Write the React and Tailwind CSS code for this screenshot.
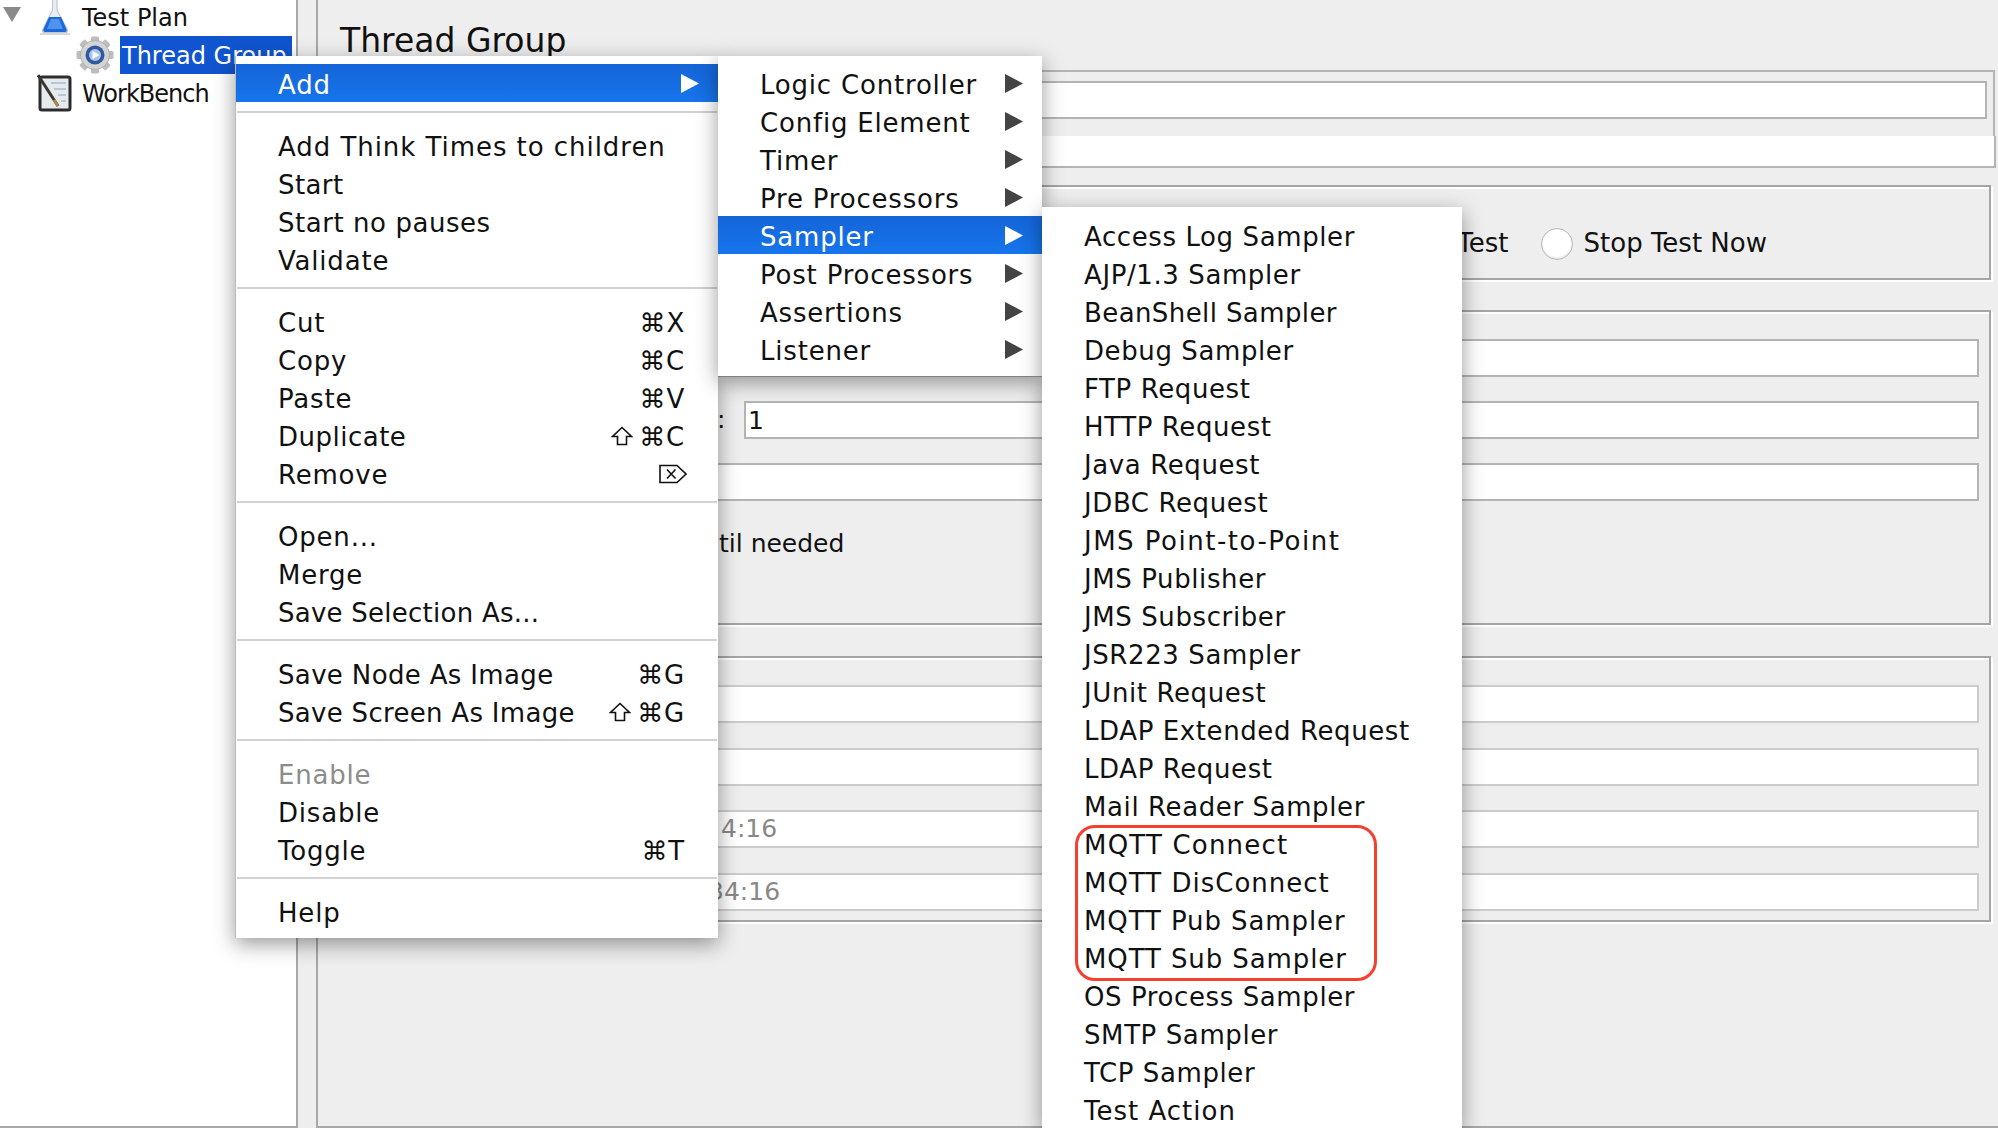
import React from "react";

const FONT = "font-['DejaVu_Sans','Liberation_Sans',sans-serif]";

const mainMenu = [
  { label: "Add", active: true, arrow: true },
  "sep",
  { label: "Add Think Times to children", track: "tracking-[0.95px]" },
  { label: "Start", track: "tracking-[0.4px]" },
  { label: "Start no pauses", track: "tracking-[0.55px]" },
  { label: "Validate" },
  "sep",
  { label: "Cut", keys: "⌘X" },
  { label: "Copy", keys: "⌘C" },
  { label: "Paste", keys: "⌘V" },
  { label: "Duplicate", keys: "⌘C", shift: true, track: "tracking-[0.5px]" },
  { label: "Remove" , del: true},
  "sep",
  { label: "Open..." },
  { label: "Merge" },
  { label: "Save Selection As...", track: "tracking-[0.25px]" },
  "sep",
  { label: "Save Node As Image", track: "tracking-[0.35px]", keys: "⌘G" },
  { label: "Save Screen As Image", track: "tracking-[0.3px]", keys: "⌘G", shift: true },
  "sep",
  { label: "Enable", disabled: true },
  { label: "Disable" },
  { label: "Toggle", keys: "⌘T" },
  "sep",
  { label: "Help" },
];

const addMenu = [
  "Logic Controller",
  "Config Element",
  "Timer",
  "Pre Processors",
  "Sampler",
  "Post Processors",
  "Assertions",
  "Listener",
];

const samplers = [
  { label: "Access Log Sampler" },
  { label: "AJP/1.3 Sampler" },
  { label: "BeanShell Sampler", track: "tracking-[0.4px]" },
  { label: "Debug Sampler" },
  { label: "FTP Request" },
  { label: "HTTP Request" },
  { label: "Java Request" },
  { label: "JDBC Request" },
  { label: "JMS Point-to-Point", track: "tracking-[1.5px]" },
  { label: "JMS Publisher" },
  { label: "JMS Subscriber" },
  { label: "JSR223 Sampler" },
  { label: "JUnit Request" },
  { label: "LDAP Extended Request" },
  { label: "LDAP Request" },
  { label: "Mail Reader Sampler" },
  { label: "MQTT Connect", track: "tracking-[1.2px]" },
  { label: "MQTT DisConnect", track: "tracking-[1px]" },
  { label: "MQTT Pub Sampler", track: "tracking-[0.9px]" },
  { label: "MQTT Sub Sampler", track: "tracking-[0.9px]" },
  { label: "OS Process Sampler" },
  { label: "SMTP Sampler" },
  { label: "TCP Sampler" },
  { label: "Test Action", track: "tracking-[1px]" },
];

function Arrow({ white }) {
  return (
    <svg width="18" height="19" viewBox="0 0 18 19" className="-mt-[3px] shrink-0">
      <path d="M0 0L18 9.5L0 19Z" fill={white ? "#ffffff" : "#444444"} />
    </svg>
  );
}

function ShiftKey() {
  return (
    <svg width="22" height="20" viewBox="0 0 22 20" fill="none" stroke="#111" strokeWidth="1.6" className="mr-[6px] -mt-[3px]">
      <path d="M11 1.5L20.5 10.5H15.5V18.5H6.5V10.5H1.5Z" />
    </svg>
  );
}

function DeleteKey() {
  return (
    <svg width="28" height="20" viewBox="0 0 28 20" fill="none" stroke="#111" strokeWidth="1.6" className="-mt-[3px]">
      <path d="M1 1.5H18L27 10L18 18.5H1Z" />
      <path d="M8 5.5L16.5 14.5M16.5 5.5L8 14.5" />
    </svg>
  );
}

function Flask() {
  return (
    <svg width="30" height="36" viewBox="0 0 30 36" className="shrink-0">
      <path d="M12.5 0H17V11L27 30Q28.5 33.5 25 33.5H5Q1.5 33.5 3 30L12.5 11Z" fill="#e9edf2" stroke="#c3c8cf" strokeWidth="1.2" />
      <path d="M9 18H21L26.5 30Q27.5 33 25 33H5Q2.5 33 3.5 30Z" fill="#1a68dc" />
      <path d="M11 20H19L23 30H7Z" fill="#4f93ee" />
      <path d="M0 35H30" stroke="#c8ccd0" strokeWidth="1.5" />
    </svg>
  );
}

function Gear() {
  const teeth = [0, 45, 90, 135, 180, 225, 270, 315];
  return (
    <svg width="38" height="38" viewBox="0 0 38 38" className="shrink-0">
      {teeth.map((a) => (
        <rect key={a} x="15" y="0.5" width="8" height="8" rx="1.5" fill="#bdbdbd" transform={`rotate(${a} 19 19)`} />
      ))}
      <circle cx="19" cy="19" r="14.5" fill="#d4d4d4" stroke="#b0b0b0" />
      <circle cx="19" cy="19" r="9.5" fill="#2f5b9e" />
      <circle cx="19" cy="19" r="6" fill="#a9c4e8" />
      <path d="M16.5 15L23.5 19L16.5 23Z" fill="#ffffff" />
    </svg>
  );
}

function Workbench() {
  return (
    <svg width="36" height="38" viewBox="0 0 36 38" className="shrink-0">
      <rect x="3" y="3" width="30" height="33" rx="2" fill="#e4eaee" stroke="#2c2c2c" strokeWidth="3" />
      <path d="M14 9H29M17 15H29M21 21H29M24 27H29" stroke="#a9bccb" strokeWidth="1.5" />
      <path d="M1 1L21 32" stroke="#3b3530" strokeWidth="3" />
      <path d="M17 26L21 32" stroke="#b08a3c" strokeWidth="3" />
    </svg>
  );
}

function MenuRow({ item }) {
  const bg = item.active ? "bg-gradient-to-b from-[#1564d8] to-[#1675ec] text-white" : "";
  const color = item.disabled ? "text-[#8c8c8c]" : "";
  return (
    <div className={`flex h-[38px] items-center justify-between pl-[42px] pr-[19px] pt-[4px] whitespace-nowrap ${bg} ${color}`}>
      <span className={item.track || ""}>{item.label}</span>
      {item.arrow && <Arrow white={item.active} />}
      {item.keys && (
        <span className="flex items-center pr-[14px]">
          {item.shift && <ShiftKey />}
          {item.keys}
        </span>
      )}
      {item.del && (
        <span className="flex pr-[12px]">
          <DeleteKey />
        </span>
      )}
    </div>
  );
}

function Input({ className, children }) {
  return (
    <div className={`flex h-[38px] items-center bg-white border-2 border-[#b4b4b4] text-[25px] ${className || ""}`}>
      {children}
    </div>
  );
}

function Group({ className, children }) {
  return (
    <div className={`mr-[7px] border-2 border-[#a5a5a5] shadow-[inset_2px_2px_0_#fff,2px_2px_0_#fff] ${className}`}>
      {children}
    </div>
  );
}

export default function App() {
  return (
    <div className={`relative flex h-[1128px] w-full overflow-hidden bg-[#eeeeee] text-[#111111] text-[25px] ${FONT}`}>
      {/* TREE */}
      <div className="w-[298px] shrink-0 border-r-2 border-b-2 border-[#a8a8a8] bg-white text-[24px]">
        <div className="-mt-[2px] flex h-[38px] items-center">
          <svg width="18" height="15" viewBox="0 0 18 15" className="ml-[3px] mr-[19px] -mt-[6px]">
            <path d="M0 0H18L9 15Z" fill="#8a8a8a" />
          </svg>
          <Flask />
          <span className="ml-[12px] pt-[2px]">Test Plan</span>
        </div>
        <div className="flex h-[38px] items-center pl-[76px]">
          <Gear />
          <span className="ml-[6px] flex h-[38px] w-[172px] items-center overflow-hidden whitespace-nowrap bg-[#1055cf] pl-[2px] pt-[2px] text-white">
            Thread Group
          </span>
        </div>
        <div className="flex h-[38px] items-center pl-[37px]">
          <Workbench />
          <span className="ml-[9px] pt-[2px] tracking-[-1px]">WorkBench</span>
        </div>
      </div>

      <div className="w-[18px] shrink-0" />

      {/* MAIN PANEL */}
      <div className="flex-1 border-l-2 border-b-2 border-[#a8a8a8]">
        <div className="flex h-[70px] items-center pl-[22px] pt-[12px] text-[33px]">Thread Group</div>

        <div className="ml-[6px] mr-[3px] h-[66px] border-t-2 border-r-2 border-[#b4b4b4] pr-[6px] pt-[9px]">
          <Input />
        </div>
        <div className="ml-[6px] mr-[2px] h-[32px] border-b-2 border-r-2 border-[#b4b4b4] bg-white" />

        <Group className="mt-[17px] ml-[6px] flex h-[95px] items-center justify-end pr-[6px] pt-[22px] text-[26px]">
          <span className="mr-[32px]">Test</span>
          <div className="h-[32px] w-[32px] rounded-full border border-[#b8b8b8] bg-white shadow-[inset_0_-1px_2px_#ddd]" />
          <span className="ml-[11px] mr-[216px]">Stop Test Now</span>
        </Group>

        <Group className="mt-[30px] ml-[6px] h-[315px] pl-[6px] pr-[10px] pt-[27px]">
          <Input />
          <div className="mt-[24px] flex items-center">
            <span className="ml-[385px] w-[27px]">:</span>
            <Input className="flex-1 pl-[2px] pt-[2px]">1</Input>
          </div>
          <Input className="mt-[24px]" />
          <div className="mt-[24px] pl-[387px]">til needed</div>
        </Group>

        <Group className="mt-[31px] ml-[6px] h-[266px] pr-[10px] pt-[27px]">
          <Input className="border-[#cccccc]" />
          <Input className="mt-[25px] border-[#cccccc]" />
          <Input className="mt-[24px] ml-[360px] border-[#cccccc] pl-[33px] text-[#888888]">4:16</Input>
          <Input className="mt-[25px] ml-[360px] border-[#cccccc] pl-[20px] text-[#888888]">34:16</Input>
        </Group>
      </div>

      {/* CONTEXT MENU */}
      <div className="absolute left-[235px] top-[56px] w-[483px] bg-white pt-[8px] pb-[8px] text-[26px] tracking-[0.8px] shadow-[0_6px_20px_rgba(0,0,0,0.4)] border-l border-[#bbbbbb]">
        {mainMenu.map((item, i) =>
          item === "sep" ? (
            <div key={i} className="h-[24px] pt-[9px]">
              <div className="mx-[1px] h-[2px] bg-[#d2d2d2]" />
            </div>
          ) : (
            <MenuRow key={i} item={item} />
          ),
        )}
      </div>

      {/* ADD SUBMENU */}
      <div className="absolute left-[718px] top-[56px] w-[324px] bg-white py-[8px] text-[26px] tracking-[0.8px] shadow-[0_6px_20px_rgba(0,0,0,0.4)]">
        {addMenu.map((label) => (
          <MenuRow key={label} item={{ label, arrow: true, active: label === "Sampler" }} />
        ))}
      </div>

      {/* SAMPLER SUBMENU */}
      <div className="absolute left-[1042px] top-[207px] w-[420px] bg-white pt-[10px] text-[26px] tracking-[0.6px] shadow-[0_6px_20px_rgba(0,0,0,0.4)]">
        {samplers.map((s) => (
          <div key={s.label} className={`flex h-[38px] items-center whitespace-nowrap pl-[42px] pt-[3px] ${s.track || ""}`}>
            {s.label}
          </div>
        ))}
        {/* red highlight round the MQTT items */}
        <div className="absolute left-[33px] top-[618px] h-[156px] w-[302px] rounded-[20px] border-[3px] border-[#f4402f]" />
      </div>
    </div>
  );
}
